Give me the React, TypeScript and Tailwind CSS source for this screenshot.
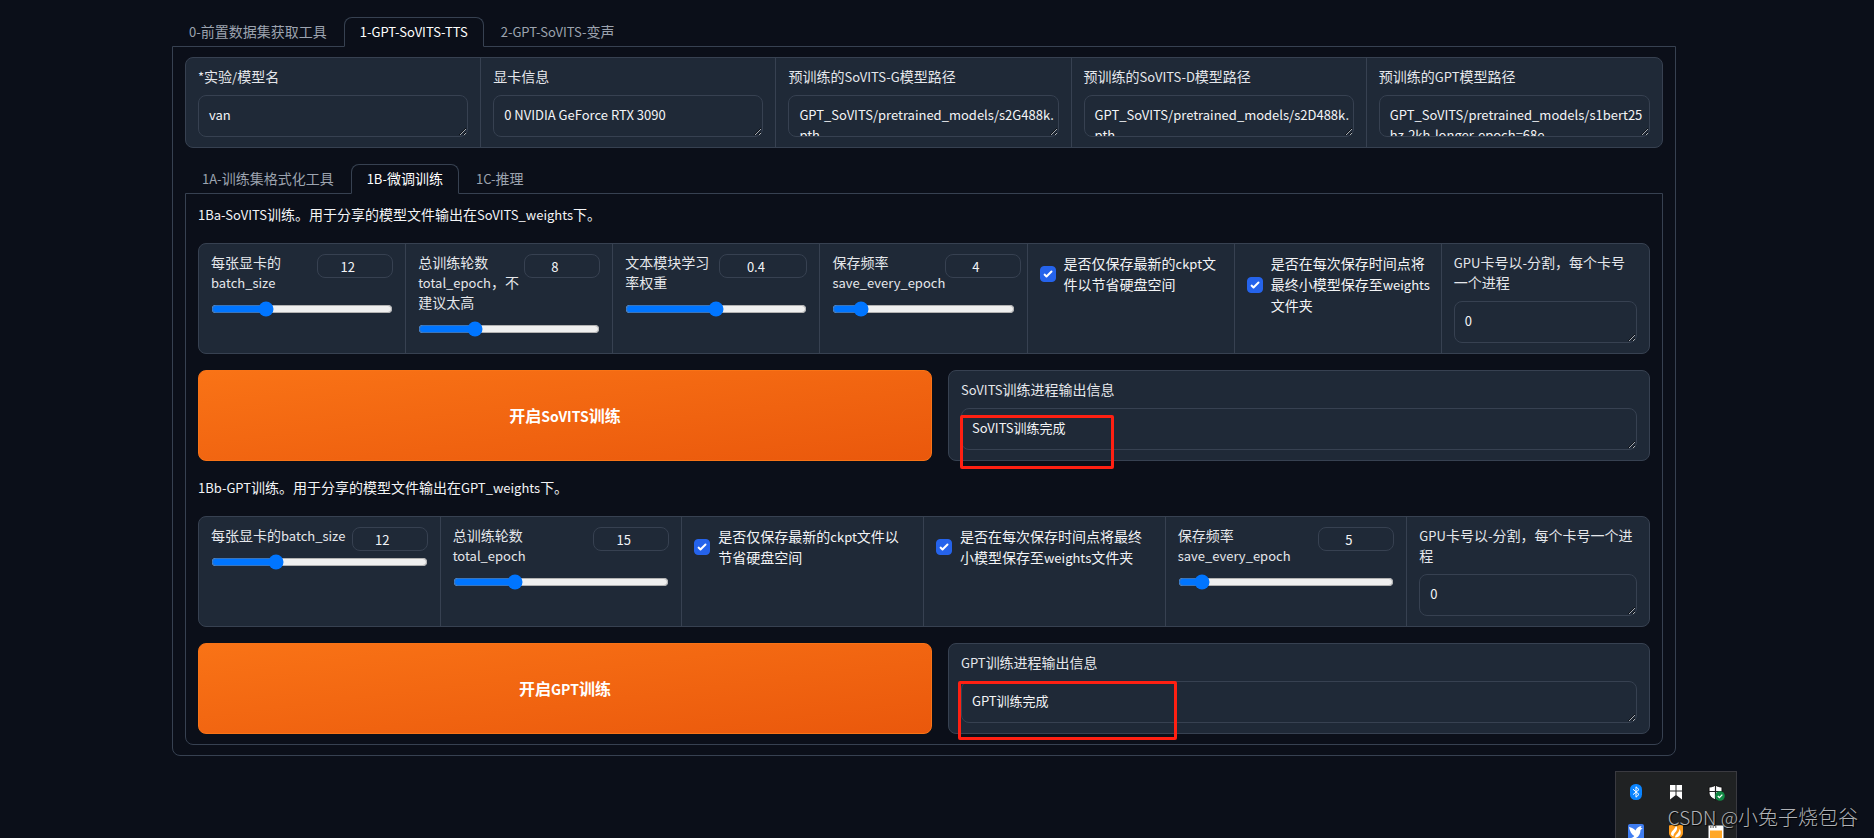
import React, { useId } from "react";

/* Latin runs sit one step smaller than the Han characters around them. */
function Mixed({ text }: { text: string }) {
  return (
    <>
      {text.split(/([\x20-\x7e]+)/).map((part, i) =>
        i % 2 === 1 ? (
          <span key={i} className="text-[13px] leading-none">
            {part}
          </span>
        ) : (
          part
        )
      )}
    </>
  );
}

function TabBar({ tabs, active }: { tabs: string[]; active: number }) {
  return (
    <div role="tablist" className="relative z-10 -mb-px flex">
      {tabs.map((tab, i) => (
        <button
          key={tab}
          type="button"
          role="tab"
          aria-selected={i === active}
          className={
            i === active
              ? "h-[30px] rounded-t-lg border border-[#374151] border-b-[#0b0f19] bg-[#0b0f19] px-[15px] pb-0.5 text-sm text-white"
              : "h-[30px] border border-transparent px-4 pb-0.5 text-sm text-[#9ca3af]"
          }
        >
          <Mixed text={tab} />
        </button>
      ))}
    </div>
  );
}

function FieldGroup({ columns, children }: { columns: string; children: React.ReactNode }) {
  return (
    <div
      className={`grid ${columns} divide-x divide-[#374151] overflow-hidden rounded-lg border border-[#374151] bg-[#1f2937]`}
    >
      {children}
    </div>
  );
}

function TextField({ label, value }: { label: string; value: string }) {
  const id = useId();
  return (
    <div className="flex min-w-0 flex-col gap-[9px] px-3 pt-2 pb-2.5">
      <label htmlFor={id} className="text-sm leading-5 text-[#e5e7eb]">
        <Mixed text={label} />
      </label>
      <textarea
        id={id}
        rows={1}
        defaultValue={value}
        className="block h-[42px] w-full resize-y overflow-hidden rounded-lg border border-[#374151] bg-[#1f2937] py-[9px] pr-0 pl-2.5 text-[13px] leading-5 text-[#f3f4f6]"
      />
    </div>
  );
}

type SliderProps = {
  label: string;
  min: number;
  max: number;
  step?: number;
  value: number;
  wide?: boolean;
};

function SliderField({ label, min, max, step = 1, value, wide }: SliderProps) {
  const id = useId();
  return (
    <div className="min-w-0 px-3 pt-2 pb-2.5">
      <div className="flex items-start justify-between">
        <label htmlFor={id} className="flex-1 pb-[9px] text-sm leading-5 whitespace-pre-line text-[#e5e7eb]">
          <Mixed text={label} />
        </label>
        <input
          type="number"
          aria-label={label}
          min={min}
          max={max}
          step={step}
          defaultValue={value}
          className={`mt-0.5 h-6 shrink-0 rounded-lg border border-[#374151] bg-[#1f2937] px-2 text-center text-[13px] leading-5 text-[#f3f4f6] ${
            wide ? "w-[88px]" : "w-[76px]"
          }`}
        />
      </div>
      <input
        id={id}
        type="range"
        min={min}
        max={max}
        step={step}
        defaultValue={value}
        className="block h-4 w-full accent-[#0075ff]"
      />
    </div>
  );
}

function CheckField({ label }: { label: string }) {
  return (
    <div className="min-w-0 py-[9px] pr-1 pl-3">
      <label className="flex items-center gap-2 text-sm leading-[21px] text-[#f3f4f6]">
        <span className="relative size-4 shrink-0">
          <input
            type="checkbox"
            defaultChecked
            className="block size-4 appearance-none rounded border border-[#2563eb] bg-[#2563eb]"
          />
          <svg viewBox="0 0 16 16" className="pointer-events-none absolute inset-0 size-4" fill="white">
            <path d="M12.2 4.8a1 1 0 0 1 0 1.4l-5 5a1 1 0 0 1-1.4 0l-2-2a1 1 0 0 1 1.4-1.4l1.3 1.3 4.3-4.3a1 1 0 0 1 1.4 0z" />
          </svg>
        </span>
        <span className="whitespace-pre-line">
          <Mixed text={label} />
        </span>
      </label>
    </div>
  );
}

function RunRow({
  action,
  label,
  value,
  mark,
}: {
  action: string;
  label: string;
  value: string;
  mark: string;
}) {
  return (
    <div className="grid grid-cols-[734fr_702fr] gap-4">
      <button
        type="button"
        className="rounded-lg border border-[#f97316] bg-[linear-gradient(to_bottom_right,#f97316,#ea580c)] pb-0.5 text-base font-bold text-white"
      >
        {action.split(/([A-Za-z]+)/).map((part, i) =>
          i % 2 === 1 ? (
            <span key={i} className="text-sm leading-none">
              {part}
            </span>
          ) : (
            part
          )
        )}
      </button>
      <div className="relative min-w-0 rounded-lg border border-[#374151] bg-[#1f2937]">
        <TextField label={label} value={value} />
        <div className={`pointer-events-none absolute rounded-xs border-3 border-[#ff2012] ${mark}`} />
      </div>
    </div>
  );
}

function Note({ text }: { text: string }) {
  return (
    <p className="-mt-px pb-px text-sm leading-[23px] text-[#f3f4f6]">
      <Mixed text={text} />
    </p>
  );
}

function Tray() {
  return (
    <div className="absolute right-[137px] bottom-0 grid h-[67px] w-[122px] auto-rows-[40px] grid-cols-[40px_40px_40px] justify-items-center overflow-hidden border border-b-0 border-[#3a3a40] bg-[#202223] pt-3">
      <svg viewBox="0 0 12 16" className="h-4 w-3">
        <rect width="12" height="16" rx="5.5" fill="#0a84ff" />
        <path d="M3 5.2l6 5.2-3 2.8V2.8l3 2.8-6 5" fill="none" stroke="white" strokeWidth="1" />
      </svg>
      <svg viewBox="0 0 12 16" className="h-4 w-3" fill="white">
        <path d="M0 1h5.5v5.5H0zM6.5 1H12v5.5H6.5zM0 7.5h5.5v3.800L0 15.500zM6.500 7.500H12v8l-5.500-4.200z" />
      </svg>
      <svg viewBox="0 0 18 17" className="h-[17px] w-[18px]">
        <path d="M8.5 1c2 1.4 4 2 6.5 2v5c0 4-2.6 6.2-6.5 8C4.6 14.2 2 12 2 8V3c2.5 0 4.5-.6 6.5-2z" fill="white" stroke="#111" strokeWidth="1" />
        <path d="M8.5 1v15M2 7.5h13" stroke="#202223" strokeWidth="1.2" />
        <circle cx="13" cy="12" r="4.8" fill="#118a44" />
        <path d="M10.8 12l1.6 1.6 2.9-3" fill="none" stroke="white" strokeWidth="1.3" />
      </svg>
      <svg viewBox="0 0 16 16" className="size-4">
        <rect width="16" height="16" rx="2" fill="#3f7df0" />
        <path d="M1 3c2.5.5 5 1.5 6.5 3.5C8.5 4 10.5 2.5 13.5 2l-.8 2 2 .3-2.2 1.700c0 4-2 7.500-6 8.500-1.500.2-2.500 0-3.500-.5 1.500-.3 2.500-1 3.200-2C3.500 10.500 1.800 7 1 3z" fill="white" />
      </svg>
      <svg viewBox="0 0 14 16" className="h-4 w-3.5">
        <path d="M0 1.5L7 0l7 1.500V9c0 3-3 5.500-7 7-4-1.500-7-4-7-7z" fill="#ff9d1c" />
        <path d="M2 10C2 7 6 5.500 7 1.500c2 2.500 1 5-1 7-1.200 1.200-1.500 2.500-1.500 3.800C3.200 12 2 11 2 10zM6 13.500c0-3 4-4 4.500-8.500 2.500 3.500 1.500 8-4.500 8.500z" fill="white" />
      </svg>
      <svg viewBox="0 0 16 16" className="size-4">
        <path d="M.5 1.500h15V17H.5z" fill="white" />
        <path d="M2 3h1.500M4.500 3H6M7 3h1.500" stroke="#222" strokeWidth="1.2" />
        <path d="M2 6.500h12V16H2z" fill="#ffa726" />
      </svg>
    </div>
  );
}

export default function App() {
  return (
    <main
      lang="zh-CN"
      className="relative min-h-screen overflow-hidden bg-[#0b0f19] pt-[17px] pr-[26px] font-['Noto_Sans_CJK_SC',sans-serif]"
    >
      <div className="mx-auto max-w-[1536px] px-4">
        <TabBar tabs={["0-前置数据集获取工具", "1-GPT-SoVITS-TTS", "2-GPT-SoVITS-变声"]} active={1} />
        <div className="flex flex-col gap-4 rounded-b-lg border border-[#374151] px-3 py-2.5">
          <FieldGroup columns="grid-cols-5">
            <TextField label="*实验/模型名" value="van" />
            <TextField label="显卡信息" value="0 NVIDIA GeForce RTX 3090" />
            <TextField label="预训练的SoVITS-G模型路径" value={"GPT_SoVITS/pretrained_models/s2G488k.\npth"} />
            <TextField label="预训练的SoVITS-D模型路径" value={"GPT_SoVITS/pretrained_models/s2D488k.\npth"} />
            <TextField
              label="预训练的GPT模型路径"
              value={"GPT_SoVITS/pretrained_models/s1bert25\nhz-2kh-longer-epoch=68e"}
            />
          </FieldGroup>

          <div>
            <TabBar tabs={["1A-训练集格式化工具", "1B-微调训练", "1C-推理"]} active={1} />
            <div className="flex flex-col gap-4 rounded-b-lg border border-[#374151] px-3 py-2.5">
              <Note text="1Ba-SoVITS训练。用于分享的模型文件输出在SoVITS_weights下。" />
              <FieldGroup columns="grid-cols-7">
                <SliderField label={"每张显卡的\nbatch_size"} min={1} max={40} value={12} />
                <SliderField label={"总训练轮数\ntotal_epoch，不建议太高"} min={1} max={25} value={8} />
                <SliderField label="文本模块学习率权重" min={0.2} max={0.6} step={0.05} value={0.4} wide />
                <SliderField label={"保存频率\nsave_every_epoch"} min={1} max={25} value={4} />
                <CheckField label={"是否仅保存最新的ckpt文\n件以节省硬盘空间"} />
                <CheckField label={"是否在每次保存时间点将\n最终小模型保存至weights\n文件夹"} />
                <TextField label="GPU卡号以-分割，每个卡号一个进程" value="0" />
              </FieldGroup>
              <RunRow
                action="开启SoVITS训练"
                label="SoVITS训练进程输出信息"
                value="SoVITS训练完成"
                mark="left-[11px] top-[44px] h-[54px] w-[154px]"
              />
              <Note text="1Bb-GPT训练。用于分享的模型文件输出在GPT_weights下。" />
              <FieldGroup columns="grid-cols-6">
                <SliderField label="每张显卡的batch_size" min={1} max={40} value={12} />
                <SliderField label={"总训练轮数\ntotal_epoch"} min={2} max={50} value={15} />
                <CheckField label={"是否仅保存最新的ckpt文件以\n节省硬盘空间"} />
                <CheckField label={"是否在每次保存时间点将最终\n小模型保存至weights文件夹"} />
                <SliderField label={"保存频率\nsave_every_epoch"} min={1} max={50} value={5} />
                <TextField label="GPU卡号以-分割，每个卡号一个进程" value="0" />
              </FieldGroup>
              <RunRow
                action="开启GPT训练"
                label="GPT训练进程输出信息"
                value="GPT训练完成"
                mark="left-[9px] top-[37px] h-[59px] w-[219px]"
              />
            </div>
          </div>
        </div>
      </div>

      <Tray />
      <p className="absolute right-4 bottom-1.5 text-xl leading-[30px] font-light text-[#b0b2b6] [text-shadow:1px_1px_1px_#000]">
        <span className="text-[19px] leading-none">CSDN @</span>小兔子烧包谷
      </p>
    </main>
  );
}
